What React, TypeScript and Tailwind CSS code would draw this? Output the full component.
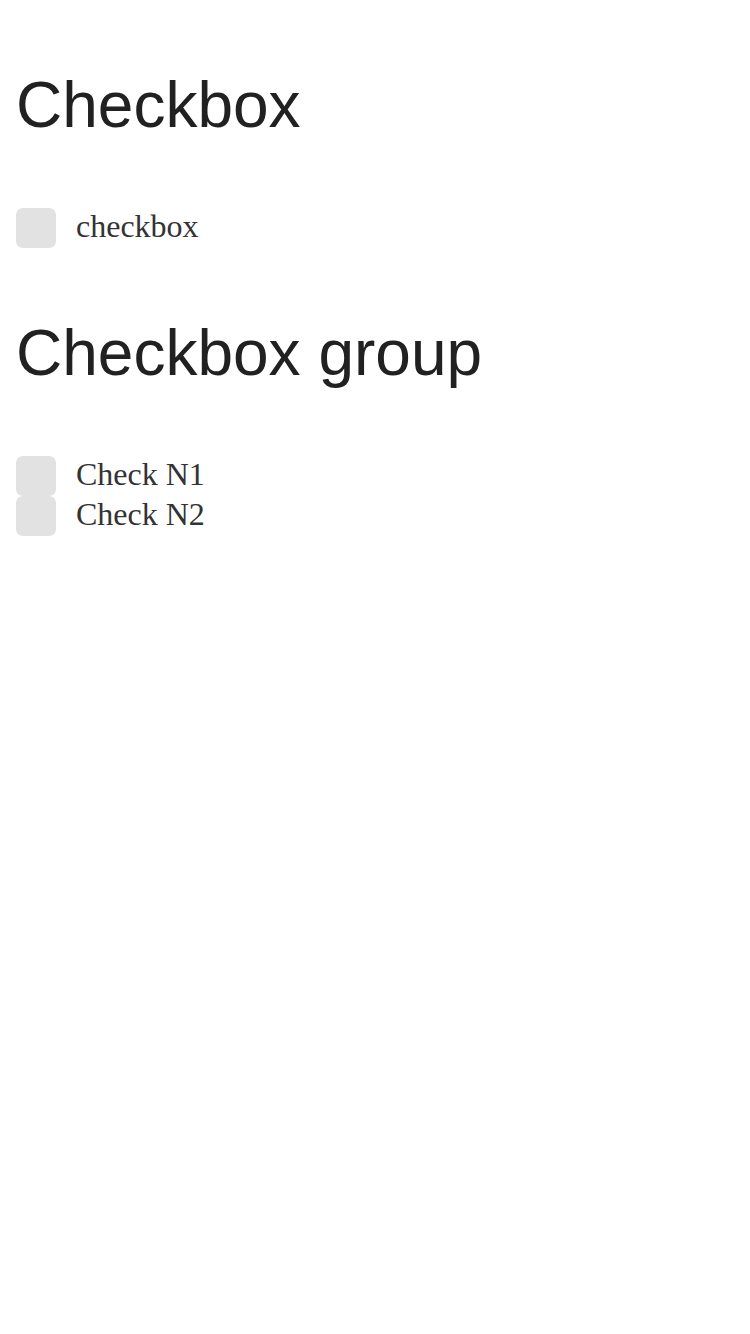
export default function App() {
  const Row = ({ label }: { label: string }) => (
    <label className="flex h-[40px] items-center">
      <span className="block h-[40px] w-[40px] shrink-0 rounded-[7px] bg-[#e2e2e2]" />
      <span className="ml-[20px] pb-[4px] text-[32px] leading-[37px] text-[#333333] [font-family:'Liberation_Serif',serif]">
        {label}
      </span>
    </label>
  );
  const Heading = ({ children }: { children: string }) => (
    <h1 className="text-[64px] leading-[74px] font-normal text-[#212121] [font-family:'Liberation_Sans',Arial,sans-serif]">
      {children}
    </h1>
  );
  return (
    <div className="min-h-[1334px] w-[750px] bg-white px-[16px]">
      <section className="pt-[68px]">
        <Heading>Checkbox</Heading>
        <div className="mt-[66px] flex flex-col">
          <Row label="checkbox" />
        </div>
      </section>
      <section className="pt-[68px]">
        <Heading>Checkbox group</Heading>
        <div className="mt-[66px] flex flex-col">
          <Row label="Check N1" />
          <Row label="Check N2" />
        </div>
      </section>
    </div>
  );
}
